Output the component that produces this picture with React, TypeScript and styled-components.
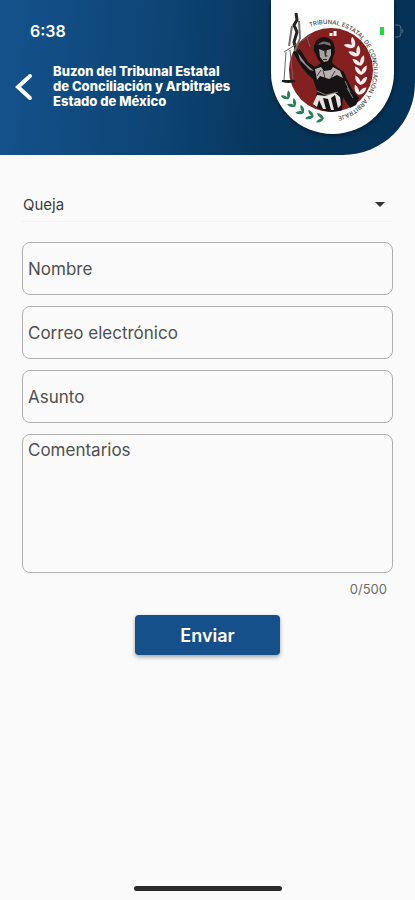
import React, { useState } from "react";
import styled, { createGlobalStyle } from "styled-components";

const GlobalStyle = createGlobalStyle`
  *, *::before, *::after { box-sizing: border-box; }
  body {
    margin: 0;
    background: #fafafa;
    color: #3c3c3c;
    font-family: Inter, "Liberation Sans", sans-serif;
  }
  input, textarea, select, button { font: inherit; color: inherit; }
`;

const Screen = styled.div`
  min-height: 100vh;
  display: flex;
  flex-direction: column;
`;

const Header = styled.header`
  position: relative;
  height: 155px;
  padding: 20px 0 0 12px;
  border-bottom-right-radius: 72px;
  background: linear-gradient(95deg, #15528c 0%, #0c4474 40%, #07365c 65%, #053156 100%);
  color: #fff;
`;

const Clock = styled.time`
  display: block;
  padding-left: 18px;
  font-size: 16px;
  line-height: 22px;
  font-weight: 600;
`;

const TitleRow = styled.div`
  display: flex;
  align-items: center;
  gap: 17px;
  margin-top: 22px;
`;

const BackButton = styled.button`
  display: flex;
  width: 24px;
  height: 32px;
  padding: 0;
  border: 0;
  background: none;
  cursor: pointer;
`;

const Title = styled.h1`
  margin: 0;
  font-size: 13px;
  line-height: 15px;
  font-weight: 800;
`;

const Badge = styled.div`
  position: absolute;
  top: 0;
  right: 21px;
  width: 123px;
  height: 134px;
  border-radius: 0 0 62px 62px;
  background: #fff;
  box-shadow: 0 1px 4px rgba(0, 0, 0, 0.6);
  svg { display: block; }
`;

const Battery = styled.svg`
  position: absolute;
  top: 23px;
  right: 11px;
`;

const Form = styled.form`
  display: flex;
  flex-direction: column;
  gap: 11px;
  padding: 32px 22px 0;
`;

const SelectWrap = styled.div`
  display: flex;
  align-items: center;
  margin-bottom: 9px;
  border-bottom: 1px solid #f2f2f2;
`;

const Select = styled.select`
  flex: 1;
  height: 34px;
  padding: 0 0 0 1px;
  border: 0;
  background: none;
  appearance: none;
  font-size: 15px;
`;

const Caret = styled.svg`
  margin: 0 8px 0 -18px;
  pointer-events: none;
`;

const fieldStyle = `
  display: block;
  width: 100%;
  border: 1px solid #b0b0b0;
  border-radius: 8px;
  background: transparent;
  font-size: 17px;
  &::placeholder { color: #505050; opacity: 1; }
`;

const TextField = styled.input`
  ${fieldStyle}
  height: 53px;
  padding: 0 5px;
`;

const Comments = styled.textarea`
  ${fieldStyle}
  height: 139px;
  padding: 4px 5px;
  line-height: 22px;
  resize: none;
`;

const Counter = styled.output`
  align-self: flex-end;
  margin: -4px 6px 0 0;
  font-size: 13px;
  line-height: 18px;
  color: #6c6c6c;
`;

const Submit = styled.button`
  align-self: center;
  width: 145px;
  height: 40px;
  margin-top: 6px;
  border: 0;
  border-radius: 4px;
  background: #15508a;
  box-shadow: 0 2px 4px rgba(0, 0, 0, 0.35);
  color: #fff;
  font-size: 18px;
  font-weight: 600;
  cursor: pointer;
`;

const HomeBar = styled.div`
  align-self: center;
  width: 148px;
  height: 5px;
  margin: auto 0 9px;
  border-radius: 3px;
  background: #2b2b2b;
`;

const whiteLeaves = [
  [350, 43, -45], [355, 51, -32], [359, 60, -18],
  [361, 69, -4], [361, 79, 6], [360, 89, 14],
];
const greenLeaves = [
  [286, 95, 146], [292, 103, 136], [300, 110, 124], [309, 115, 110], [319, 118, 96],
];

const leaf = "M0 6 Q-6 4 -6 -3 Q-2 -2 0 3 Q2 -2 6 -3 Q6 4 0 6Z";

function Emblem() {
  return (
    <svg width="123" height="134" viewBox="271 0 123 134" role="img" aria-label="Tribunal Estatal de Conciliación y Arbitraje">
      <defs>
        <path id="ring" d="M310 27 A47 47 0 1 1 326 118" />
      </defs>
      <circle cx="331" cy="70" r="42" fill="#84201f" />
      <text fontSize="6" fontWeight="500" fill="#444">
        <textPath href="#ring">TRIBUNAL ESTATAL DE CONCILIACIÓN Y ARBITRAJE</textPath>
      </text>
      <g fill="#f7eded">
        {whiteLeaves.map(([x, y, r]) => (
          <path key={y} transform={`translate(${x} ${y}) rotate(${r})`} d={leaf} />
        ))}
      </g>
      <path d="M331 36v-3M335 36v-5" stroke="#fff" strokeWidth="3" />
      <g fill="#2b7f58">
        {greenLeaves.map(([x, y, r]) => (
          <path key={y} transform={`translate(${x} ${y}) rotate(${r - 180}) scale(0.8)`} d={leaf} />
        ))}
      </g>
      <path d="M293 52 L300 49 L308 62 L315 67 L321 63 Q317 60 316 54 Q313 52 314 46 Q316 38 323 37 Q332 37 334 45 Q336 52 333 57 L332 63 L338 68 Q344 70 346 77 L352 89 L359 98 L356 105 L350 108 L343 97 L342 110 Q328 115 314 106 L317 91 L313 79 Q302 71 293 52Z" fill="#151313" />
      <path d="M318 45 Q322 39 330 43 L331 46 L324 44Z" fill="#77706d" />
      <path d="M319 49 L324 51 L331 49 L331 55 L328 61 L324 62 L320 57Z" fill="#a9a3a0" />
      <path d="M324 50 L327 50 L326 55 L328 56 L325 57Z M323 59h4v1h-4Z" fill="#332e2d" />
      <path d="M298 53 L306 64 L314 71 L310 70 L300 60Z" fill="#99918e" />
      <path d="M315 69 L321 67 L324 71 L331 70 L333 67 L340 71 L343 78 L337 75 L329 79 L320 76 L317 80Z" fill="#b8b3b0" />
      <path d="M317 76 L321 70 M325 78 L323 70 M331 78 L335 71" stroke="#443c3a" strokeWidth="1" />
      <path d="M317 91 L326 95 L338 92 M347 88 L353 98 M345 81 L350 92" fill="none" stroke="#85807d" strokeWidth="1" />
      <path d="M317 95 L313 104 L317 107 L319 100 L323 109 L326 109 L323 98 L328 99 L331 110 L334 110 L331 98 L335 95 L338 108 L341 105 L340 97 L335 93 L325 96Z" fill="#e7e3e1" />
      <path d="M296 13 L297 20 L294 25 L297 32 L294 42 L297 53" fill="none" stroke="#252222" strokeWidth="3" />
      <path d="M292 26 L289 46 M299 21 L300 38 L295 51" fill="none" stroke="#77716f" strokeWidth="2" />
      <path d="M284 52 L311 35 M286 52 L284 80 M290 50 L293 79 M307 37 L310 47" fill="none" stroke="#6b6666" strokeWidth="1" />
      <path d="M282 80 H295 V82 Q289 84 282 82Z" fill="#1d1b1b" />
    </svg>
  );
}

export default function App() {
  const [comment, setComment] = useState("");
  return (
    <Screen>
      <GlobalStyle />
      <Header>
        <Clock>6:38</Clock>
        <TitleRow>
          <BackButton type="button" aria-label="Volver">
            <svg width="24" height="32" viewBox="0 0 24 32" fill="none" stroke="#fff" strokeWidth="4" strokeLinecap="round">
              <path d="M18 5 L6 16 L18 27" />
            </svg>
          </BackButton>
          <Title>
            Buzon del Tribunal Estatal<br />de Conciliación y Arbitrajes<br />Estado de México
          </Title>
        </TitleRow>
        <Badge><Emblem /></Badge>
        <Battery width="26" height="16" viewBox="0 0 26 16" aria-hidden="true">
          <path d="M2 4h4v8H2Z" fill="#18df35" />
          <path d="M17 2h3q3 0 3 4v4q0 4-3 4h-3M24 6q2 2 0 4" fill="none" stroke="#516c83" strokeWidth="1" />
        </Battery>
      </Header>
      <Form onSubmit={(e) => e.preventDefault()}>
        <SelectWrap>
          <Select aria-label="Tipo de mensaje" defaultValue="Queja">
            <option>Queja</option>
          </Select>
          <Caret width="10" height="5" viewBox="0 0 10 5" aria-hidden="true"><path d="M0 0H10L5 5Z" fill="#333" /></Caret>
        </SelectWrap>
        <TextField aria-label="Nombre" placeholder="Nombre" />
        <TextField type="email" aria-label="Correo electrónico" placeholder="Correo electrónico" />
        <TextField aria-label="Asunto" placeholder="Asunto" />
        <Comments aria-label="Comentarios" placeholder="Comentarios" maxLength={500} value={comment} onChange={(e) => setComment(e.target.value)} />
        <Counter>{comment.length}/500</Counter>
        <Submit type="submit">Enviar</Submit>
      </Form>
      <HomeBar />
    </Screen>
  );
}
